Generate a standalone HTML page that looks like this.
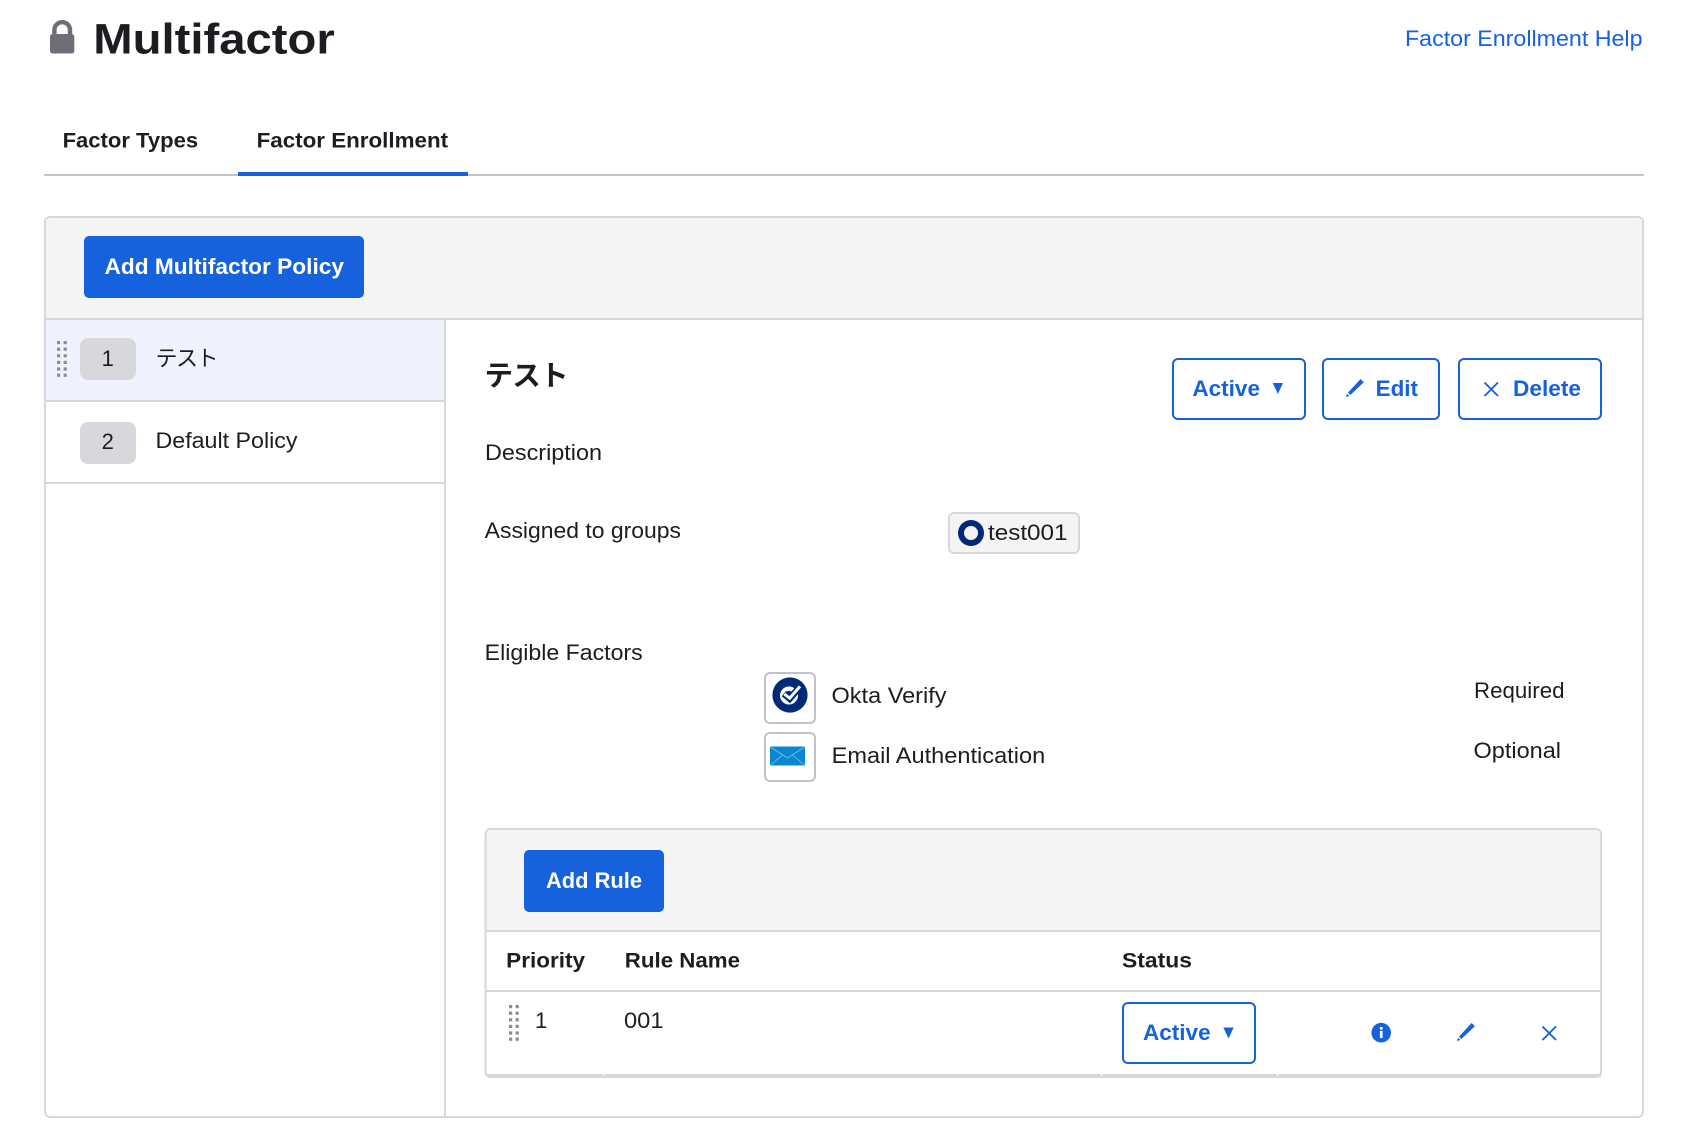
<!DOCTYPE html>
<html lang="ja">
<head>
<meta charset="utf-8">
<title>Multifactor</title>
<style>
html,body{margin:0;padding:0;background:#fff;width:1684px;height:1142px;overflow:hidden}
svg{display:block}
text{font-family:"Liberation Sans","Noto Sans CJK JP",sans-serif;fill:#1d1d21;font-size:22px}
.b{font-weight:700;font-size:21.5px}
.blue{fill:#1662dd}
.w{fill:#fff}
.o{fill:#fff;stroke:#1662dd;stroke-width:2}
.ic{fill:none;stroke:#1662dd;stroke-width:1.9}
.d{fill:#8c8c96}
</style>
</head>
<body>
<svg width="1684" height="1142" viewBox="0 0 1684 1142" xmlns="http://www.w3.org/2000/svg">
<defs>
<g id="h" class="d">
<rect x="0" y="0" width="3.2" height="3.2"/><rect x="6.6" y="0" width="3.2" height="3.2"/>
<rect x="0" y="6.6" width="3.2" height="3.2"/><rect x="6.6" y="6.6" width="3.2" height="3.2"/>
<rect x="0" y="13.2" width="3.2" height="3.2"/><rect x="6.6" y="13.2" width="3.2" height="3.2"/>
<rect x="0" y="19.8" width="3.2" height="3.2"/><rect x="6.6" y="19.8" width="3.2" height="3.2"/>
<rect x="0" y="26.4" width="3.2" height="3.2"/><rect x="6.6" y="26.4" width="3.2" height="3.2"/>
<rect x="0" y="32.6" width="3.2" height="3.2"/><rect x="6.6" y="32.6" width="3.2" height="3.2"/>
</g>
<path id="p" d="M0 18 L1 14.6 L3.4 17 Z M2 13.6 L14.6 0 L17.8 3.2 L4.4 16 Z" fill="#1662dd"/>
</defs>

<!-- page header -->
<rect x="50" y="34" width="24.3" height="19.5" rx="2.6" fill="#6e6e78"/>
<path d="M54.4 35V30a7.8 7.8 0 0 1 15.6 0V35" fill="none" stroke="#6e6e78" stroke-width="4.4"/>
<text x="93.3" y="53.5" class="b" style="font-size:42.5px" textLength="241.5" lengthAdjust="spacingAndGlyphs">Multifactor</text>
<text x="1405" y="46" class="blue" textLength="237.5" lengthAdjust="spacingAndGlyphs">Factor Enrollment Help</text>

<!-- tabs -->
<text x="62.6" y="147.7" class="b" textLength="135.5" lengthAdjust="spacingAndGlyphs">Factor Types</text>
<text x="256.6" y="147.7" class="b" textLength="191.5" lengthAdjust="spacingAndGlyphs">Factor Enrollment</text>
<rect x="44" y="174" width="1600" height="2" fill="#c1c1c8"/>
<rect x="238" y="172" width="230" height="4" fill="#1662dd"/>

<!-- main panel -->
<rect x="45" y="217" width="1598" height="900" rx="5" fill="#fff" stroke="#d7d7dc" stroke-width="2"/>
<path d="M46 319V223a5 5 0 0 1 5-5H1637a5 5 0 0 1 5 5V319Z" fill="#f4f4f4"/>
<rect x="46" y="318" width="1596" height="2" fill="#d7d7dc"/>
<rect x="84" y="236" width="280" height="62" rx="5" fill="#1662dd"/>
<text x="104.5" y="274" class="b w" style="font-size:22px" textLength="239.5" lengthAdjust="spacingAndGlyphs">Add Multifactor Policy</text>

<!-- policy list -->
<rect x="46" y="320" width="398" height="80" fill="#f0f3fe"/>
<rect x="46" y="400" width="398" height="2" fill="#d7d7dc"/>
<rect x="46" y="482" width="398" height="2" fill="#d7d7dc"/>
<rect x="444" y="320" width="2" height="796" fill="#d7d7dc"/>
<use href="#h" x="57" y="341"/>
<rect x="80" y="338" width="56" height="42" rx="8" fill="#d7d7dc"/>
<text x="107.7" y="366" text-anchor="middle" style="font-size:22px">1</text>
<text x="155.5" y="366" style="font-size:22px" textLength="63" lengthAdjust="spacing">テスト</text>
<rect x="80" y="422" width="56" height="42" rx="8" fill="#d7d7dc"/>
<text x="107.7" y="449" text-anchor="middle" style="font-size:22px">2</text>
<text x="155.5" y="448" textLength="142" lengthAdjust="spacingAndGlyphs">Default Policy</text>

<!-- policy detail -->
<text x="484.5" y="385.5" class="b" style="font-size:28.5px" textLength="84" lengthAdjust="spacing">テスト</text>

<rect x="1173" y="359" width="132" height="60" rx="5" class="o"/>
<text x="1192.4" y="396" class="b blue" style="font-size:22.5px" textLength="67.6" lengthAdjust="spacingAndGlyphs">Active</text>
<path d="M1272.8 383H1283L1277.9 394Z" fill="#1662dd"/>

<rect x="1323" y="359" width="116" height="60" rx="5" class="o"/>
<use href="#p" x="1346" y="379"/>
<text x="1375.6" y="396" class="b blue" style="font-size:22.5px" textLength="42.4" lengthAdjust="spacingAndGlyphs">Edit</text>

<rect x="1459" y="359" width="142" height="60" rx="5" class="o"/>
<path d="M1484.5 382.5L1498 396M1498 382.5L1484.5 396" class="ic"/>
<text x="1513" y="396" class="b blue" style="font-size:22.5px" textLength="68" lengthAdjust="spacingAndGlyphs">Delete</text>

<text x="485" y="460" textLength="117" lengthAdjust="spacingAndGlyphs">Description</text>

<text x="484.7" y="538" textLength="196.3" lengthAdjust="spacingAndGlyphs">Assigned to groups</text>
<rect x="949" y="513" width="130" height="40" rx="5" fill="#f4f4f4" stroke="#d7d7dc" stroke-width="2"/>
<circle cx="971" cy="533" r="13" fill="#00297a"/>
<circle cx="971" cy="533" r="7" fill="#f4f4f4"/>
<text x="988" y="540" style="font-size:22.5px" textLength="79.5" lengthAdjust="spacingAndGlyphs">test001</text>

<text x="484.7" y="660" textLength="158" lengthAdjust="spacingAndGlyphs">Eligible Factors</text>

<rect x="765" y="673" width="50" height="50" rx="5" fill="#fff" stroke="#c1c1c8" stroke-width="2"/>
<circle cx="790" cy="695" r="17.6" fill="#00297a"/>
<circle cx="789" cy="695.5" r="6.8" fill="none" stroke="#fff" stroke-width="4.4"/>
<path d="M783.8 693.7L789.7 698.6L801 685.6" fill="none" stroke="#00297a" stroke-width="6.6"/>
<path d="M784.3 693.9L789.7 698.2L800 686.4" fill="none" stroke="#fff" stroke-width="3"/>
<text x="831.5" y="703" textLength="115" lengthAdjust="spacingAndGlyphs">Okta Verify</text>

<rect x="765" y="733" width="50" height="48" rx="5" fill="#fff" stroke="#c1c1c8" stroke-width="2"/>
<rect x="770" y="746.5" width="35" height="19" fill="#0a86d0"/>
<path d="M770.5 747L787.5 758L804.5 747M770.5 765L782.5 755M804.5 765L792.5 755" fill="none" stroke="#7cc0ea" stroke-width=".8"/>
<text x="831.6" y="763" textLength="213.6" lengthAdjust="spacingAndGlyphs">Email Authentication</text>

<text x="1474" y="698" textLength="90.5" lengthAdjust="spacingAndGlyphs">Required</text>
<text x="1473.5" y="758" textLength="87.5" lengthAdjust="spacingAndGlyphs">Optional</text>

<!-- rules panel -->
<rect x="485.5" y="829" width="1115.5" height="248" rx="5" fill="#fff" stroke="#d7d7dc" stroke-width="2"/>
<path d="M486.5 931V835a5 5 0 0 1 5-5H1595a5 5 0 0 1 5 5V931Z" fill="#f4f4f4"/>
<rect x="486" y="930" width="1115" height="2" fill="#d7d7dc"/>
<rect x="524" y="850" width="140" height="62" rx="5" fill="#1662dd"/>
<text x="546" y="888" class="b w" style="font-size:22px" textLength="96" lengthAdjust="spacingAndGlyphs">Add Rule</text>

<text x="506.2" y="967.5" class="b" textLength="78.8" lengthAdjust="spacingAndGlyphs">Priority</text>
<text x="624.8" y="967.5" class="b" textLength="115.2" lengthAdjust="spacingAndGlyphs">Rule Name</text>
<text x="1122" y="967.5" class="b" textLength="70" lengthAdjust="spacingAndGlyphs">Status</text>
<rect x="486" y="990" width="1115" height="2" fill="#d7d7dc"/>

<use href="#h" x="509" y="1005"/>
<text x="535" y="1028" style="font-size:22px">1</text>
<text x="624" y="1028" style="font-size:22.5px" textLength="39.5" lengthAdjust="spacingAndGlyphs">001</text>

<rect x="1123" y="1003" width="132" height="60" rx="5" class="o"/>
<text x="1143" y="1040" class="b blue" style="font-size:22.5px" textLength="67.6" lengthAdjust="spacingAndGlyphs">Active</text>
<path d="M1223.3 1027.5H1233.7L1228.5 1038.5Z" fill="#1662dd"/>

<circle cx="1381.2" cy="1032.7" r="9.8" fill="#1662dd"/>
<rect x="1379.9" y="1031" width="2.7" height="7" fill="#fff"/>
<rect x="1379.9" y="1027" width="2.7" height="2.7" fill="#fff"/>
<use href="#p" x="1457" y="1023"/>
<path d="M1542.5 1026.5L1556 1040M1556 1026.5L1542.5 1040" class="ic"/>

<rect x="486" y="1074" width="1115" height="3" fill="#d7d7dc"/>
<rect x="603" y="1074" width="1" height="2" fill="#fff"/>
<rect x="1101" y="1074" width="1" height="2" fill="#fff"/>
<rect x="1277" y="1074" width="1" height="2" fill="#fff"/>
</svg>
</body>
</html>
